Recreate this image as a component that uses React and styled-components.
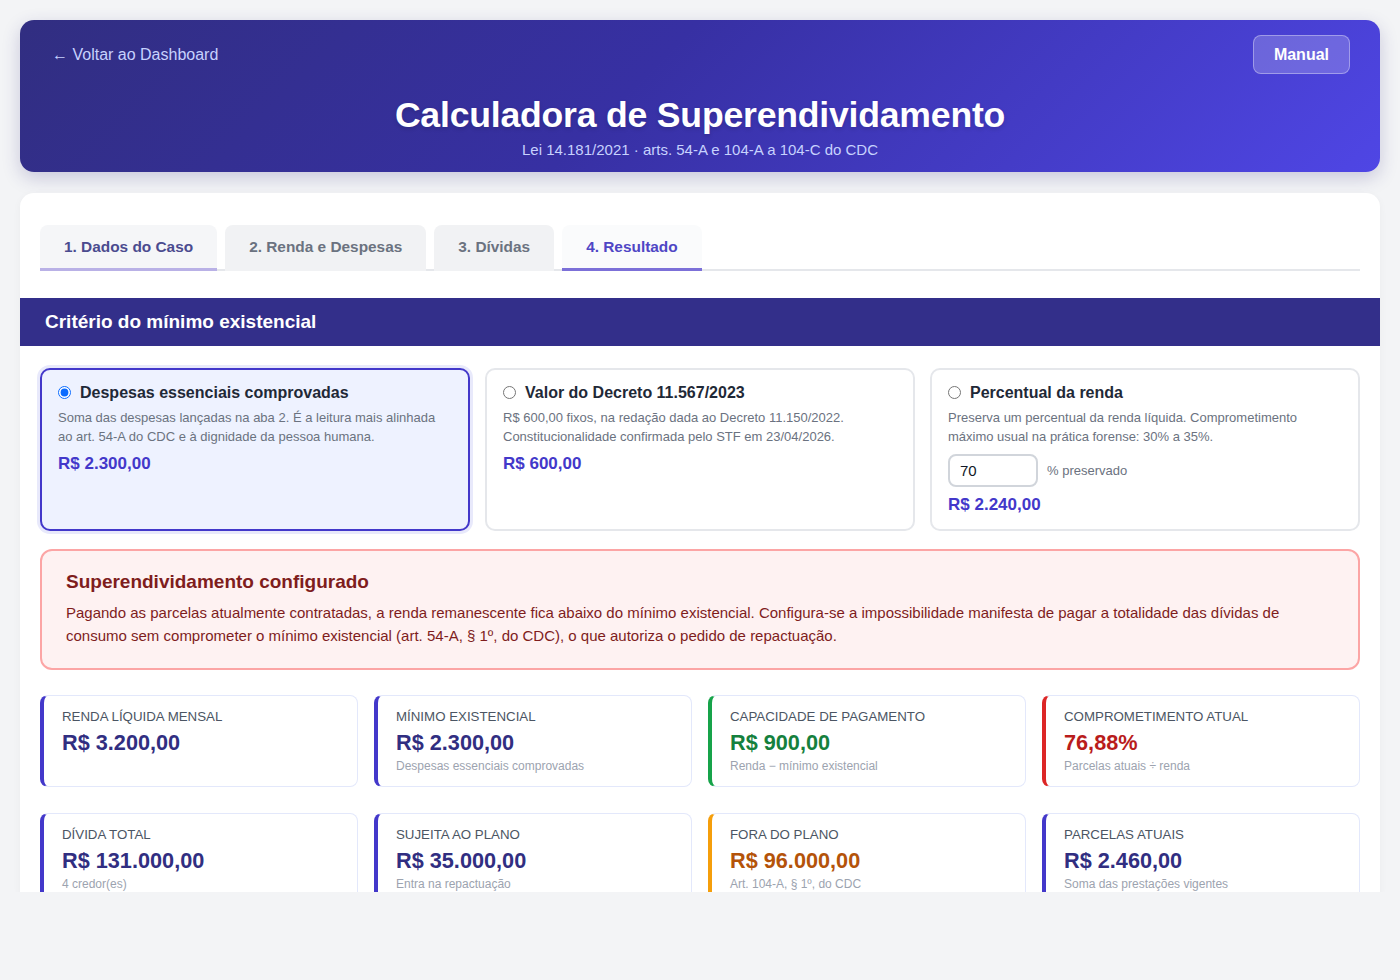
import React, { useState } from 'react'
import styled, { createGlobalStyle } from 'styled-components'

const GlobalStyle = createGlobalStyle`
  html, body {
    margin: 0;
    padding: 0;
    background: #f3f4f6;
    font-family: "Liberation Sans", Arial, sans-serif;
    color: #1f2937;
  }
  * { box-sizing: border-box; }
`

const Viewport = styled.div`
  height: 892px;
  overflow: hidden;
  padding: 20px 20px 0;
`

const Header = styled.header`
  background: linear-gradient(135deg, #312e81 0%, #3730a3 45%, #4f46e5 100%);
  border-radius: 14px;
  padding: 15px 30px 14px 30px;
  color: #fff;
  box-shadow: 0 6px 18px rgba(49, 46, 129, 0.22);
`

const TopRow = styled.div`
  display: flex;
  justify-content: space-between;
  align-items: center;
`

const BackLink = styled.a`
  color: #c7d2fe;
  font-size: 16px;
  text-decoration: none;
  padding-left: 2px;
  cursor: pointer;
`

const ManualButton = styled.button`
  background: rgba(255, 255, 255, 0.2);
  border: 1px solid rgba(255, 255, 255, 0.35);
  color: #fff;
  font-family: inherit;
  font-weight: 700;
  font-size: 16px;
  border-radius: 8px;
  height: 39px;
  padding: 0 20px;
  cursor: pointer;
`

const Title = styled.h1`
  text-align: center;
  margin: 21px 0 0;
  font-size: 35.6px;
  line-height: 40px;
  font-weight: 700;
  letter-spacing: -0.2px;
  text-shadow: 0 2px 4px rgba(0, 0, 0, 0.15);
`

const Subtitle = styled.p`
  text-align: center;
  margin: 6px 0 0;
  font-size: 15px;
  color: #c7d2fe;
`

const Panel = styled.main`
  margin-top: 21px;
  background: #fff;
  border-radius: 14px;
  padding-top: 32px;
  box-shadow: 0 2px 8px rgba(0, 0, 0, 0.04);
`

const Tabs = styled.nav`
  display: flex;
  gap: 8px;
  margin: 0 20px;
  border-bottom: 2px solid #e5e7eb;
`

const Tab = styled.button`
  font-family: inherit;
  font-size: 15.4px;
  font-weight: 700;
  height: 46px;
  padding: 1px 24px 0;
  border: none;
  border-radius: 8px 8px 0 0;
  background: ${p => (p.$active ? '#fafbfc' : p.$visited ? '#f5f6f8' : '#f1f2f4')};
  color: ${p => (p.$active ? '#4f46c5' : p.$visited ? '#4b4b8f' : '#6b7280')};
  border-bottom: 3px solid ${p => (p.$active ? '#7c70d8' : p.$visited ? '#b9b1e6' : 'transparent')};
  margin-bottom: -2px;
  cursor: pointer;
`

const SectionBar = styled.h2`
  margin: 27px 0 0;
  background: #332f8a;
  color: #fff;
  font-size: 19px;
  font-weight: 700;
  height: 48px;
  display: flex;
  align-items: center;
  padding: 0 25px;
`

const Body = styled.div`
  padding: 22px 20px 0;
`

const OptionGrid = styled.div`
  display: grid;
  grid-template-columns: repeat(3, 1fr);
  gap: 15px;
`

const OptionCard = styled.label`
  display: block;
  min-height: 163px;
  border-radius: 10px;
  padding: 13px 16px 14px;
  cursor: pointer;
  border: 2px solid ${p => (p.$selected ? '#4338ca' : '#e5e7eb')};
  background: ${p => (p.$selected ? '#eef2ff' : '#fff')};
  box-shadow: ${p => (p.$selected ? '0 0 0 3px #e8e9fb' : 'none')};
`

const OptionHead = styled.div`
  display: flex;
  align-items: center;
  gap: 9px;
`

const Radio = styled.input`
  margin: 0 0 2px;
  width: 13px;
  height: 13px;
  accent-color: #0b6bff;
`

const OptionTitle = styled.span`
  font-size: 16px;
  line-height: 20px;
  font-weight: 700;
  color: #1f2937;
`

const OptionText = styled.p`
  margin: 5px 0 0;
  font-size: 13px;
  line-height: 19px;
  color: #6b7280;
`

const OptionValue = styled.div`
  margin-top: 8px;
  font-size: 17px;
  font-weight: 700;
  color: #4338ca;
`

const InputRow = styled.div`
  display: flex;
  align-items: center;
  gap: 9px;
  margin-top: 8px;
`

const PercentInput = styled.input`
  width: 90px;
  height: 33px;
  border: 2px solid #d1d5db;
  border-radius: 8px;
  padding: 0 10px;
  font-family: inherit;
  font-size: 15px;
  color: #111827;
  outline: none;
`

const InputHint = styled.span`
  font-size: 13px;
  color: #6b7280;
`

const Alert = styled.section`
  margin-top: 18px;
  background: #fef2f2;
  border: 2px solid #fca5a5;
  border-radius: 12px;
  padding: 20px 24px 21px;
  color: #7f1d1d;
`

const AlertTitle = styled.h3`
  margin: 0;
  font-size: 19px;
  font-weight: 700;
`

const AlertText = styled.p`
  margin: 8px 0 0;
  font-size: 15px;
  line-height: 23px;
`

const StatGrid = styled.div`
  display: grid;
  grid-template-columns: repeat(4, 1fr);
  column-gap: 16px;
  row-gap: 26px;
  margin-top: 25px;
`

const StatCard = styled.div`
  min-height: 92px;
  border: 1px solid #e3e8fb;
  border-left: 4px solid ${p => p.$accent};
  border-radius: 8px;
  padding: 13px 18px 10px;
  background: #fff;
`

const StatLabel = styled.div`
  font-size: 13.3px;
  color: #4b5563;
  text-transform: uppercase;
`

const StatValue = styled.div`
  margin-top: 6px;
  font-size: 21.7px;
  font-weight: 700;
  color: ${p => p.$color};
`

const StatNote = styled.div`
  margin-top: 3px;
  font-size: 12px;
  color: #9ca3af;
`

const tabs = [
  { label: '1. Dados do Caso', visited: true },
  { label: '2. Renda e Despesas' },
  { label: '3. Dívidas' },
  { label: '4. Resultado', active: true },
]

const stats = [
  { label: 'Renda líquida mensal', value: 'R$ 3.200,00', accent: '#4338ca', color: '#312e81' },
  { label: 'Mínimo existencial', value: 'R$ 2.300,00', note: 'Despesas essenciais comprovadas', accent: '#4338ca', color: '#312e81' },
  { label: 'Capacidade de pagamento', value: 'R$ 900,00', note: 'Renda − mínimo existencial', accent: '#16a34a', color: '#15803d' },
  { label: 'Comprometimento atual', value: '76,88%', note: 'Parcelas atuais ÷ renda', accent: '#dc2626', color: '#b91c1c' },
  { label: 'Dívida total', value: 'R$ 131.000,00', note: '4 credor(es)', accent: '#4338ca', color: '#312e81' },
  { label: 'Sujeita ao plano', value: 'R$ 35.000,00', note: 'Entra na repactuação', accent: '#4338ca', color: '#312e81' },
  { label: 'Fora do plano', value: 'R$ 96.000,00', note: 'Art. 104-A, § 1º, do CDC', accent: '#f59e0b', color: '#b45309' },
  { label: 'Parcelas atuais', value: 'R$ 2.460,00', note: 'Soma das prestações vigentes', accent: '#4338ca', color: '#312e81' },
]

export default function App() {
  const [criterion, setCriterion] = useState('despesas')
  const [percent, setPercent] = useState('70')

  return (
    <>
      <GlobalStyle />
      <Viewport>
        <Header>
          <TopRow>
            <BackLink>← Voltar ao Dashboard</BackLink>
            <ManualButton>Manual</ManualButton>
          </TopRow>
          <Title>Calculadora de Superendividamento</Title>
          <Subtitle>Lei 14.181/2021 · arts. 54-A e 104-A a 104-C do CDC</Subtitle>
        </Header>

        <Panel>
          <Tabs>
            {tabs.map(t => (
              <Tab key={t.label} $active={t.active} $visited={t.visited}>{t.label}</Tab>
            ))}
          </Tabs>

          <SectionBar>Critério do mínimo existencial</SectionBar>

          <Body>
            <OptionGrid>
              <OptionCard $selected={criterion === 'despesas'}>
                <OptionHead>
                  <Radio type="radio" name="crit" checked={criterion === 'despesas'} onChange={() => setCriterion('despesas')} />
                  <OptionTitle>Despesas essenciais comprovadas</OptionTitle>
                </OptionHead>
                <OptionText>Soma das despesas lançadas na aba 2. É a leitura mais alinhada ao art. 54-A do CDC e à dignidade da pessoa humana.</OptionText>
                <OptionValue>R$ 2.300,00</OptionValue>
              </OptionCard>

              <OptionCard $selected={criterion === 'decreto'}>
                <OptionHead>
                  <Radio type="radio" name="crit" checked={criterion === 'decreto'} onChange={() => setCriterion('decreto')} />
                  <OptionTitle>Valor do Decreto 11.567/2023</OptionTitle>
                </OptionHead>
                <OptionText>R$ 600,00 fixos, na redação dada ao Decreto 11.150/2022. Constitucionalidade confirmada pelo STF em 23/04/2026.</OptionText>
                <OptionValue>R$ 600,00</OptionValue>
              </OptionCard>

              <OptionCard $selected={criterion === 'percentual'}>
                <OptionHead>
                  <Radio type="radio" name="crit" checked={criterion === 'percentual'} onChange={() => setCriterion('percentual')} />
                  <OptionTitle>Percentual da renda</OptionTitle>
                </OptionHead>
                <OptionText>Preserva um percentual da renda líquida. Comprometimento máximo usual na prática forense: 30% a 35%.</OptionText>
                <InputRow>
                  <PercentInput value={percent} onChange={e => setPercent(e.target.value)} />
                  <InputHint>% preservado</InputHint>
                </InputRow>
                <OptionValue>R$ 2.240,00</OptionValue>
              </OptionCard>
            </OptionGrid>

            <Alert>
              <AlertTitle>Superendividamento configurado</AlertTitle>
              <AlertText>
                Pagando as parcelas atualmente contratadas, a renda remanescente fica abaixo do mínimo existencial. Configura-se a impossibilidade manifesta de pagar a totalidade das dívidas de consumo sem comprometer o mínimo existencial (art. 54-A, § 1º, do CDC), o que autoriza o pedido de repactuação.
              </AlertText>
            </Alert>

            <StatGrid>
              {stats.map(s => (
                <StatCard key={s.label} $accent={s.accent}>
                  <StatLabel>{s.label}</StatLabel>
                  <StatValue $color={s.color}>{s.value}</StatValue>
                  {s.note && <StatNote>{s.note}</StatNote>}
                </StatCard>
              ))}
            </StatGrid>
          </Body>
        </Panel>
      </Viewport>
    </>
  )
}
